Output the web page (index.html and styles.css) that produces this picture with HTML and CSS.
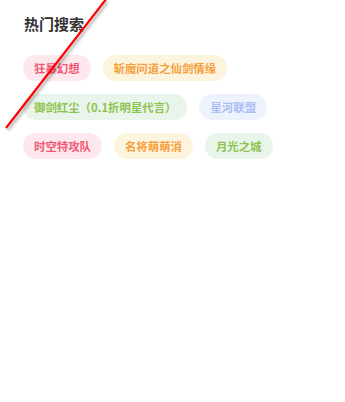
FILE: index.html
```html
<!DOCTYPE html>
<html lang="zh">
<head>
<meta charset="utf-8">
<link rel="stylesheet" href="styles.css">
</head>
<body>
<div class="page">
  <h2 class="title">热门搜索</h2>
  <div class="tags">
    <span class="tag red">狂暴幻想</span>
    <span class="tag orange">斩魔问道之仙剑情缘</span>
    <span class="tag green">御剑红尘（0.1折明星代言）</span>
    <span class="tag blue">星河联盟</span>
    <span class="tag red">时空特攻队</span>
    <span class="tag orange">名将萌萌消</span>
    <span class="tag green">月光之城</span>
  </div>
</div>
<svg class="slash" width="345" height="402" viewBox="0 0 345 402">
  <line x1="107" y1="-2" x2="6" y2="128" stroke="#ff0000" stroke-width="2.2"/>
</svg>
</body>
</html>
```
FILE: styles.css
```css
html, body {
  margin: 0;
  padding: 0;
  background: #ffffff;
}
body {
  width: 345px;
  height: 402px;
  position: relative;
  overflow: hidden;
  font-family: "Noto Sans CJK SC", "Noto Sans", sans-serif;
}
.page {
  padding: 13px 20px 0 23px;
}
.title {
  margin: 0 0 0 1px;
  font-size: 15px;
  line-height: 22px;
  font-weight: 700;
  color: #333333;
}
.tags {
  margin-top: 20px;
  display: flex;
  flex-wrap: wrap;
  column-gap: 12px;
  row-gap: 13px;
}
.tag {
  display: inline-block;
  height: 26px;
  line-height: 26px;
  padding: 0 11px;
  border-radius: 13px;
  font-size: 11.4px;
  font-weight: 700;
  white-space: nowrap;
}
.red { background: #fde9ed; color: #f25774; }
.orange { background: #fdf4de; color: #f5a03c; }
.green { background: #e9f5ea; color: #8dc34f; }
.blue { background: #eef2fd; color: #a9bef5; }
.slash {
  position: absolute;
  left: 0;
  top: 0;
  filter: drop-shadow(2px 2px 1.5px rgba(0,0,0,0.35));
}
```
